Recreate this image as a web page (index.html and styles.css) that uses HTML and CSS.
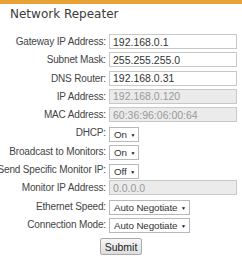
FILE: index.html
```html
<!DOCTYPE html>
<html lang="en">
<head>
    <meta charset="UTF-8">
    <title>Network Repeater</title>
    <link rel="stylesheet" href="styles.css">
</head>
<body>
    <div class="topbar"></div>
    <h1 class="title">Network Repeater</h1>
    <form class="settings">
        <label><span>Gateway IP Address:</span></label>
        <input type="text" value="192.168.0.1">
        <label><span>Subnet Mask:</span></label>
        <input type="text" value="255.255.255.0">
        <label><span>DNS Router:</span></label>
        <input type="text" value="192.168.0.31">
        <label><span>IP Address:</span></label>
        <input type="text" class="off" value="192.168.0.120" disabled>
        <label><span>MAC Address:</span></label>
        <input type="text" class="off" value="60:36:96:06:00:64" disabled>
        <label><span>DHCP:</span></label>
        <div><span class="select">On <i>&#9660;</i></span></div>
        <label><span>Broadcast to Monitors:</span></label>
        <div><span class="select">On <i>&#9660;</i></span></div>
        <label><span>Send Specific Monitor IP:</span></label>
        <div><span class="select">Off <i>&#9660;</i></span></div>
        <label><span>Monitor IP Address:</span></label>
        <input type="text" class="off" value="0.0.0.0" disabled>
        <label><span>Ethernet Speed:</span></label>
        <div><span class="select">Auto Negotiate <i>&#9660;</i></span></div>
        <label><span>Connection Mode:</span></label>
        <div><span class="select">Auto Negotiate <i>&#9660;</i></span></div>
    </form>
    <div class="submit-row">
        <button type="button">Submit</button>
    </div>
</body>
</html>
```

FILE: styles.css
```css
body {
    margin: 0;
    background: #fff;
    font-family: 'Liberation Sans', Arial, sans-serif;
    color: #333;
    overflow: hidden;
}

.topbar {
    height: 4px;
    background-color: #e8a236;
}

.title {
    margin: 2px 0 0 10px;
    font-family: 'DejaVu Sans', Verdana, sans-serif;
    font-size: 12px;
    font-weight: normal;
    color: #3a3a3a;
    line-height: 16px;
}

.settings {
    display: grid;
    grid-template-columns: 106px 128px;
    grid-auto-rows: 15px;
    column-gap: 3px;
    row-gap: 3.3px;
    margin-top: 12px;
    align-items: center;
}

.settings label {
    display: flex;
    justify-content: flex-end;
    white-space: nowrap;
    font-size: 10px;
    letter-spacing: -0.15px;
    line-height: 15px;
    color: #444;
}

.settings input {
    box-sizing: border-box;
    height: 15px;
    width: 128px;
    margin: 0;
    padding: 0 3px;
    border: 1px solid #c8c8c8;
    font-family: inherit;
    font-size: 10.5px;
    color: #333;
    background: #fff;
}

.settings input.off {
    background: #ebebeb;
    color: #999;
}

.select {
    display: inline-block;
    box-sizing: border-box;
    height: 15px;
    line-height: 13px;
    padding: 0 3px 0 4px;
    border: 1px solid #b8b8b8;
    font-size: 9.8px;
    letter-spacing: -0.1px;
    color: #333;
    background: #fff;
}

.select i {
    font-style: normal;
    font-size: 5px;
    vertical-align: 1px;
    margin-left: 1px;
    color: #111;
}

.submit-row {
    text-align: center;
    margin-top: 5px;
}

.submit-row button {
    font-family: 'Liberation Sans', Arial, sans-serif;
    font-size: 10.5px;
    height: 17px;
    padding: 0 4px;
    border: 1px solid #aaa;
    border-radius: 2px;
    background: linear-gradient(#f6f6f6, #dedede);
    color: #222;
}
```
